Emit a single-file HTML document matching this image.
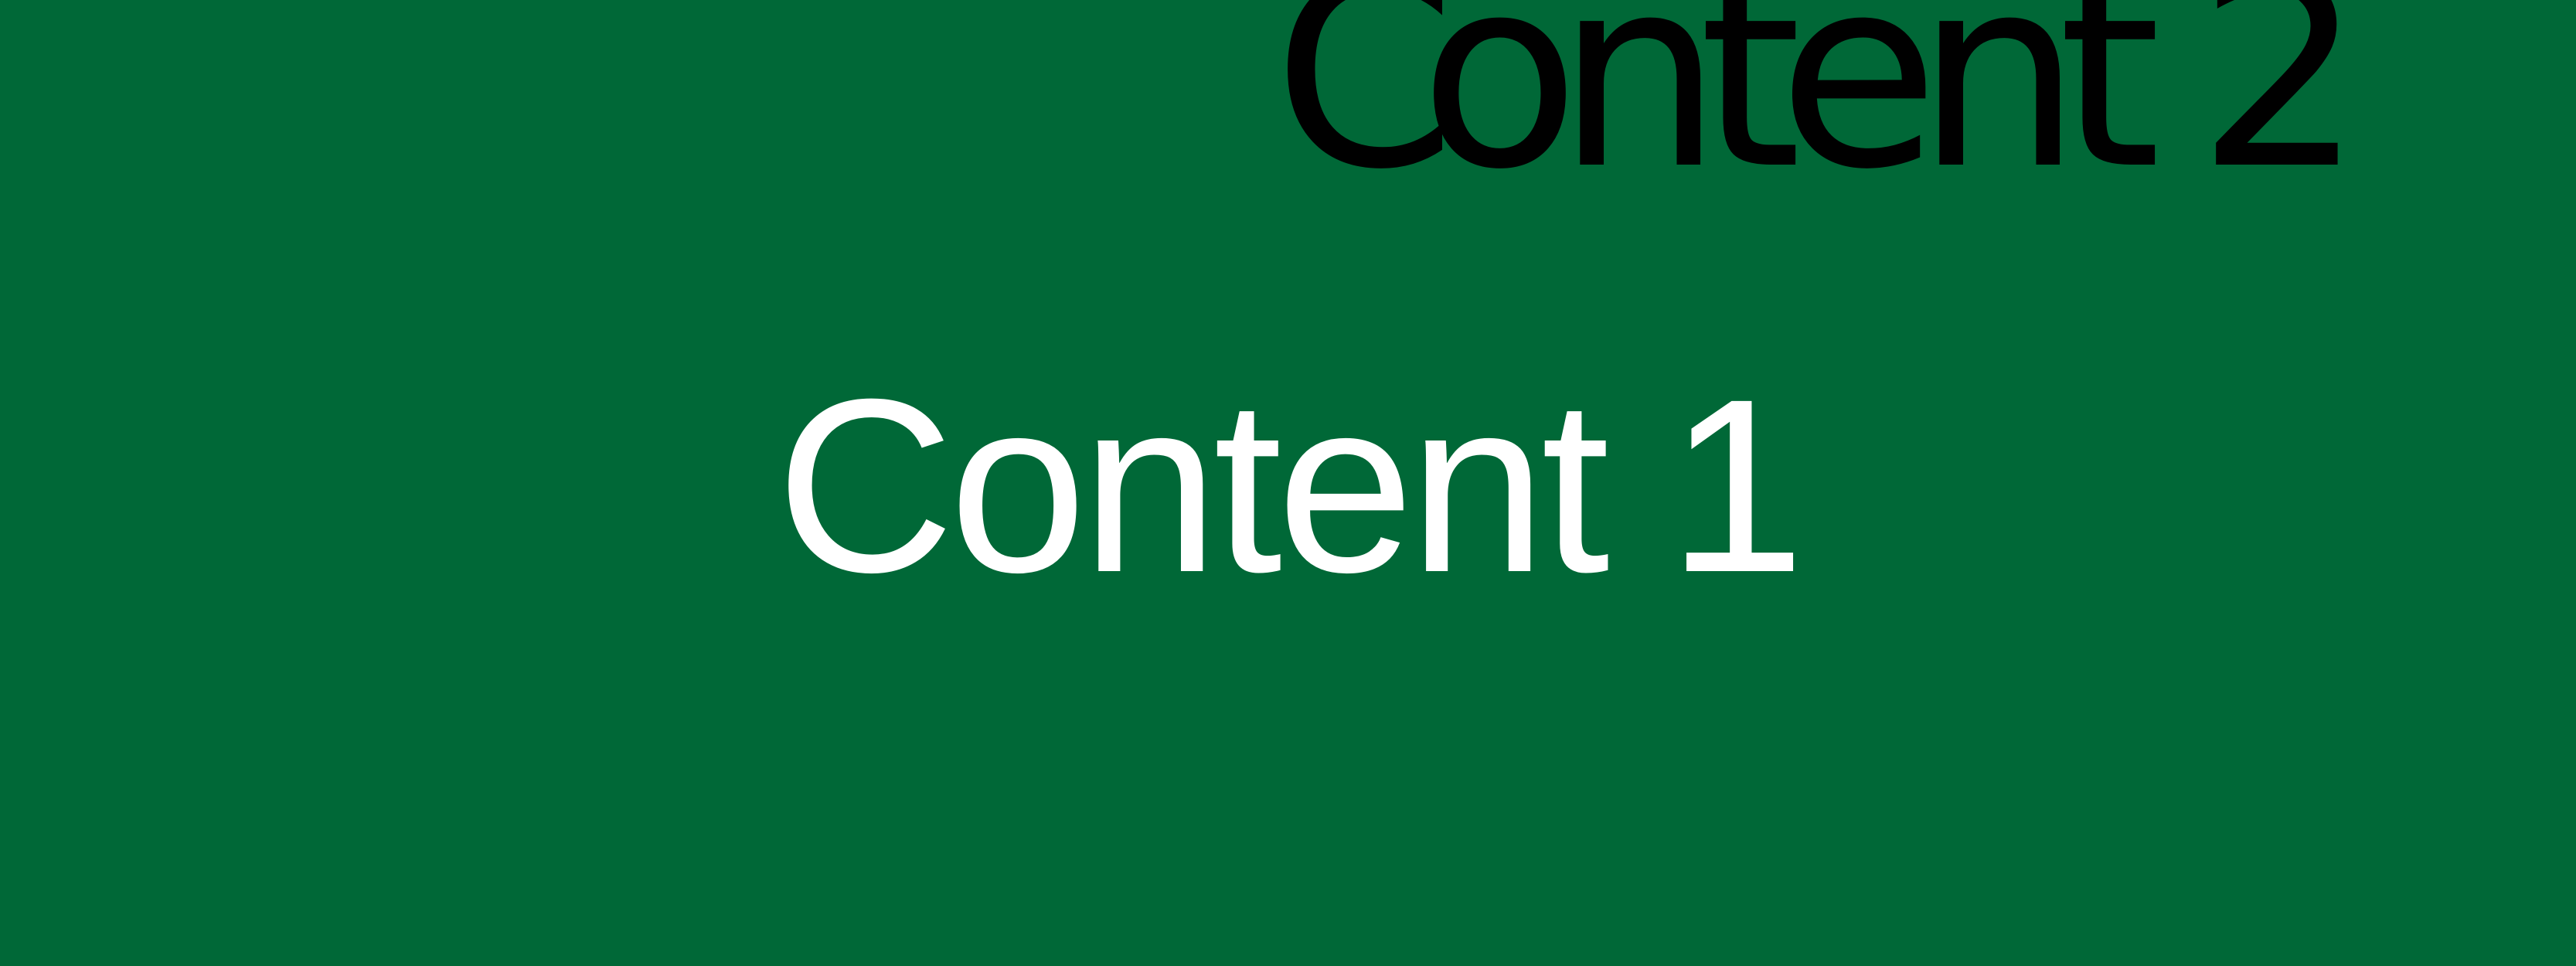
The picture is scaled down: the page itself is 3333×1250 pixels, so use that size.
<!DOCTYPE html>
<html><head><meta charset="utf-8"><style>
html,body{margin:0;padding:0;}
body{width:3333px;height:1250px;background:#006837;position:relative;overflow:hidden;}
.t1{position:absolute;left:1004px;top:468px;font-family:"Liberation Sans",sans-serif;font-size:320px;line-height:1;color:#fff;white-space:nowrap;letter-spacing:-7px;}
.t2{position:absolute;left:1647px;top:-74px;font-family:"DejaVu Sans",sans-serif;font-size:340px;line-height:1;color:#000;white-space:nowrap;letter-spacing:-31px;}
.t2 .c{margin-right:-17px;}
</style></head><body>
<div class="t2"><span class="c">C</span>ontent 2</div>
<div class="t1">Content 1</div>
</body></html>
